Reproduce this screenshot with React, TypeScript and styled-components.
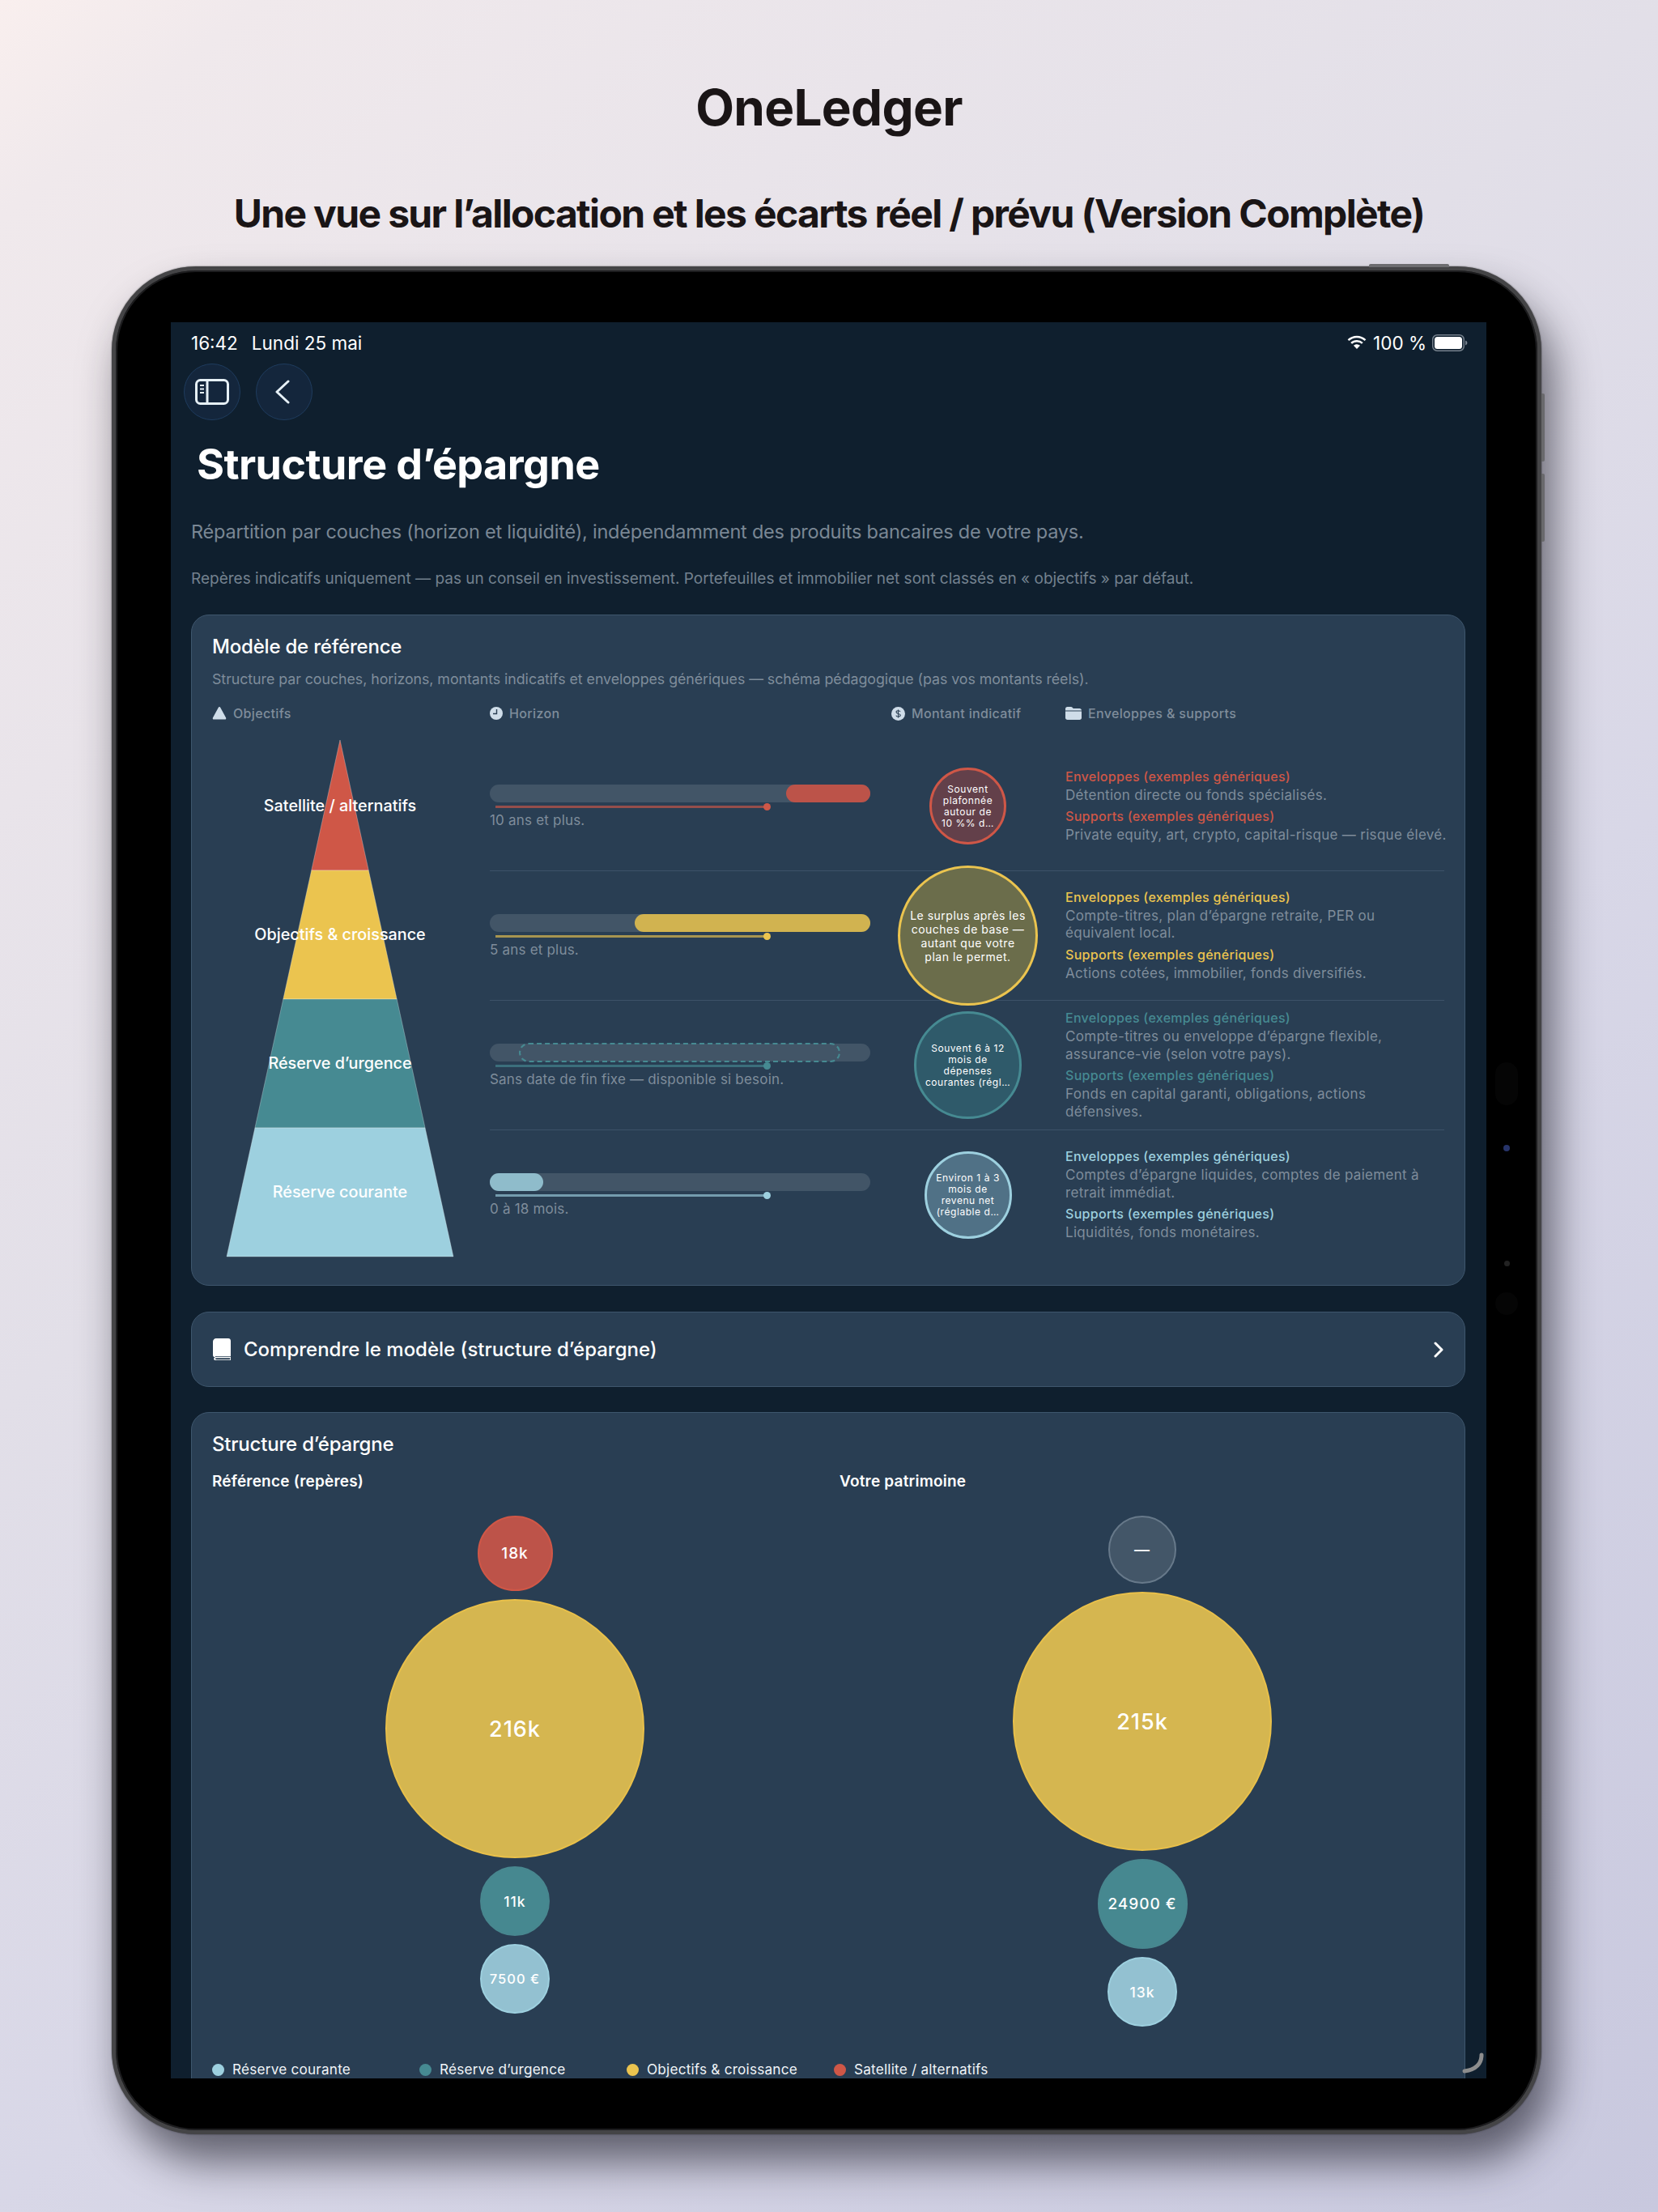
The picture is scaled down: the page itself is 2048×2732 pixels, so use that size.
import React from 'react';
import styled, { createGlobalStyle } from 'styled-components';

const colors = {
  red: '#cf5747',
  yellow: '#ebc44f',
  teal: '#468a92',
  blue: '#9dd0df',
};

const GlobalStyle = createGlobalStyle`
  html, body {
    margin: 0;
    width: 2048px;
    height: 2732px;
    overflow: hidden;
  }
  * { box-sizing: border-box; }
`;

const Page = styled.div`
  width: 2048px;
  height: 2732px;
  overflow: hidden;
  font-family: Inter, 'Liberation Sans', sans-serif;
  background: linear-gradient(140deg, #f9efee 0%, #f0e9ec 6%, #e2dfe8 39%, #d8d7e7 61%, #c8c8de 100%);
`;

const Head = styled.header`
  height: 329px;
  padding-top: 96px;
  text-align: center;
  color: #1a1516;
`;

const Title = styled.h1`
  margin: 0;
  font-size: 62px;
  line-height: 74px;
  font-weight: 700;
  letter-spacing: -0.7px;
`;

const Subtitle = styled.h2`
  margin: 65px 0 0;
  font-size: 48px;
  line-height: 58px;
  font-weight: 700;
  letter-spacing: -1.65px;
`;

const Device = styled.div`
  position: relative;
  width: 1766px;
  height: 2307px;
  margin-left: 138px;
  display: flex;
  padding: 64px 63px 64px 68px;
  background: #000;
  border: 5px solid #444446;
  border-radius: 104px;
  box-shadow: inset 0 0 0 2px #1d1d1f, 14px 34px 52px rgba(25, 25, 35, 0.62), 0 0 2px rgba(0, 0, 0, 0.6);
`;

const TopButton = styled.span`
  position: absolute;
  top: -8px;
  right: 109px;
  width: 99px;
  height: 4px;
  border-radius: 2px 2px 0 0;
  background: #6d6d70;
`;

const SideButton = styled.span<{ $top: number }>`
  position: absolute;
  top: ${({ $top }) => $top}px;
  right: -9px;
  width: 4px;
  height: 84px;
  border-radius: 0 2px 2px 0;
  background: #69696c;
`;

const BezelMark = styled.span<{ $top: number; $w: number; $h: number; $bg: string }>`
  position: absolute;
  top: ${({ $top }) => $top}px;
  right: ${({ $w }) => 38 - $w / 2}px;
  width: ${({ $w }) => $w}px;
  height: ${({ $h }) => $h}px;
  border-radius: 14px;
  background: ${({ $bg }) => $bg};
`;

const Screen = styled.main`
  position: relative;
  flex: 1;
  overflow: hidden;
  padding: 12px 26px 0 25px;
  color: #fff;
  background: #0f1f2e;
`;

const StatusBar = styled.div`
  display: flex;
  align-items: center;
  justify-content: space-between;
  height: 26px;
  margin-right: -3px;
  font-size: 22.5px;
`;

const StatusGroup = styled.div<{ $gap: number }>`
  display: flex;
  align-items: center;
  gap: ${({ $gap }) => $gap}px;
`;

const Nav = styled.nav`
  display: flex;
  gap: 19px;
  margin: 13px 0 0 -9px;
`;

const RoundButton = styled.button<{ $shift?: number }>`
  display: flex;
  align-items: center;
  justify-content: center;
  width: 70px;
  height: 70px;
  padding: 0 ${({ $shift }) => $shift ?? 0}px 0 0;
  border: 1.5px solid #1f3c5e;
  border-radius: 50%;
  background: #14263c;
`;

const PageTitle = styled.h1`
  margin: 24px 0 0 7px;
  font-size: 52px;
  line-height: 62px;
  font-weight: 700;
  letter-spacing: -0.55px;
`;

const Lead = styled.p`
  margin: 37px 0 0;
  font-size: 23.5px;
  line-height: 30px;
  letter-spacing: -0.22px;
  color: #7a8794;
`;

const Note = styled.p`
  margin: 30px 0 0;
  font-size: 19px;
  line-height: 26px;
  color: #73818e;
`;

const Card = styled.section`
  margin-top: 31px;
  padding: 0 25px;
  border: 1.5px solid #3e566d;
  border-radius: 22px;
  background: #293e53;
`;

const CardTitle = styled.h3`
  margin: 0;
  padding-top: 23px;
  font-size: 24px;
  line-height: 32px;
  font-weight: 500;
  letter-spacing: -0.2px;
`;

const CardDesc = styled.p`
  margin: 12px 0 0;
  font-size: 17.8px;
  line-height: 24px;
  letter-spacing: -0.05px;
  color: #7f8d9b;
`;

const ColumnHeads = styled.div`
  display: grid;
  grid-template-columns: 343px 496px 215px 1fr;
  margin-top: 18px;
  height: 24px;
`;

const ColumnHead = styled.div`
  display: flex;
  align-items: center;
  gap: 8px;
  font-size: 16px;
  font-weight: 500;
  letter-spacing: 0.35px;
  color: #7f8d9b;
`;

const ModelBody = styled.div`
  display: flex;
  padding: 23px 0 31px;
`;

const Pyramid = styled.div`
  position: relative;
  flex: none;
  width: 316px;
  height: 638px;
  margin: -3px 27px 0 0;
  display: flex;
  justify-content: center;
`;

const PyramidLabels = styled.div`
  position: absolute;
  inset: 0;
  padding-top: 3px;
  display: grid;
  grid-template-rows: repeat(4, 1fr);
`;

const PyramidLabel = styled.div`
  display: flex;
  align-items: center;
  justify-content: center;
  font-size: 19.8px;
  font-weight: 500;
  color: #fff;
`;

const LayerRows = styled.div`
  flex: 1;
  min-width: 0;
`;

const LayerRow = styled.div`
  display: grid;
  grid-template-columns: 470px 241px 1fr;
  align-items: center;
  height: 160px;
  border-bottom: 1.5px solid #3c5268;
  &:last-child {
    border-bottom: 0;
  }
`;

const HorizonCell = styled.div`
  padding-top: 2px;
`;

const Track = styled.div`
  position: relative;
  height: 22px;
  border-radius: 11px;
  background: #425567;
`;

const TrackFill = styled.div<{ $left: number; $width: number; $color: string }>`
  position: absolute;
  top: 0;
  left: ${({ $left }) => $left}px;
  width: ${({ $width }) => $width}px;
  height: 22px;
  border-radius: 11px;
  background: ${({ $color }) => $color};
`;

const TrackDashed = styled.div`
  position: absolute;
  top: -1px;
  left: 36px;
  width: 397px;
  height: 24px;
  border: 2.5px dashed ${colors.teal};
  border-radius: 12px;
`;

const Marker = styled.div<{ $color: string }>`
  position: relative;
  width: 338px;
  height: 3px;
  margin: 4px 0 0 7px;
  background: ${({ $color }) => $color}a6;
  &::after {
    content: '';
    position: absolute;
    right: -2px;
    top: -3px;
    width: 9px;
    height: 9px;
    border-radius: 50%;
    background: ${({ $color }) => $color};
  }
`;

const HorizonText = styled.div`
  margin-top: 4px;
  font-size: 17px;
  line-height: 23px;
  letter-spacing: 0.2px;
  color: #7f8d9b;
`;

const AmountCell = styled.div`
  display: flex;
  justify-content: center;
  align-items: center;
  height: 0;
`;

const AmountBubble = styled.div<{ $size: number; $color: string; $bg: string; $big?: boolean }>`
  flex: none;
  display: flex;
  flex-direction: column;
  align-items: center;
  justify-content: center;
  width: ${({ $size }) => $size}px;
  height: ${({ $size }) => $size}px;
  border: 3px solid ${({ $color }) => $color};
  border-radius: 50%;
  background: ${({ $bg }) => $bg};
  font-size: ${({ $big }) => ($big ? 14 : 12)}px;
  line-height: ${({ $big }) => ($big ? 17 : 14)}px;
  font-weight: 400;
  letter-spacing: ${({ $big }) => ($big ? 0.5 : 0.55)}px;
  white-space: nowrap;
  color: #fff;
`;

const EnvCell = styled.div`
  display: flex;
  flex-direction: column;
  font-size: 17px;
  line-height: 21.5px;
  letter-spacing: 0.3px;
`;

const EnvHeading = styled.div<{ $color: string; $second?: boolean }>`
  margin: ${({ $second }) => ($second ? 5 : 0)}px 0 1.5px;
  font-size: 16px;
  font-weight: 500;
  letter-spacing: 0.3px;
  color: ${({ $color }) => $color};
`;

const EnvText = styled.div<{ $nowrap?: boolean }>`
  color: #7f8d9b;
  white-space: ${({ $nowrap }) => ($nowrap ? 'nowrap' : 'normal')};
`;

const Disclosure = styled.button`
  display: flex;
  align-items: center;
  gap: 16px;
  width: 100%;
  height: 93px;
  margin-top: 32px;
  padding: 0 26px;
  border: 1.5px solid #3e566d;
  border-radius: 22px;
  background: #293e53;
  color: #fff;
  font: 500 24px Inter, sans-serif;
`;

const DisclosureLabel = styled.span`
  flex: 1;
  text-align: left;
`;

const BubbleColumns = styled.div`
  display: grid;
  grid-template-columns: 748px 748px;
  gap: 27px;
  margin-top: 18px;
`;

const ColumnTitle = styled.div`
  font-size: 19px;
  line-height: 24px;
  font-weight: 600;
  letter-spacing: 0.2px;
`;

const BubbleStack = styled.div`
  display: flex;
  flex-direction: column;
  align-items: center;
  gap: 10px;
  margin-top: 30px;
`;

const Bubble = styled.div<{ $size: number; $bg: string; $line: string; $font: number }>`
  display: flex;
  align-items: center;
  justify-content: center;
  width: ${({ $size }) => $size}px;
  height: ${({ $size }) => $size}px;
  border: 2.5px solid ${({ $line }) => $line};
  border-radius: 50%;
  background: ${({ $bg }) => $bg};
  font-size: ${({ $font }) => $font}px;
  font-weight: 500;
  letter-spacing: 1px;
`;

const Legend = styled.div`
  display: grid;
  grid-template-columns: repeat(4, 256px);
  margin: 41px 0 60px;
`;

const LegendItem = styled.div`
  display: flex;
  align-items: center;
  gap: 10px;
  font-size: 17.2px;
  line-height: 24px;
  letter-spacing: 0.2px;
  color: #f0f4f7;
`;

const LegendDot = styled.span<{ $color: string }>`
  width: 15px;
  height: 15px;
  border-radius: 50%;
  background: ${({ $color }) => $color};
`;

const ScrollHint = styled.svg`
  position: absolute;
  right: 3px;
  bottom: 6px;
`;

const SidebarIcon = () => (
  <svg width="42" height="32" viewBox="0 0 42 32" fill="none" stroke="#e6f0f6" strokeWidth="3">
    <rect x="1.5" y="1.5" width="39" height="29" rx="5" />
    <path d="M15 2v28" />
    <path d="M6 8h5M6 12.5h5M6 17h5" strokeWidth="2" />
  </svg>
);

const BackIcon = () => (
  <svg width="20" height="30" viewBox="0 0 20 30" fill="none" stroke="#e6f0f6" strokeWidth="3" strokeLinecap="round" strokeLinejoin="round">
    <path d="M17 2 3 15l14 13" />
  </svg>
);

const WifiIcon = () => (
  <svg width="26" height="18" viewBox="0 0 24 17" fill="#fff">
    <path d="M12 3c3.5 0 6.7 1.3 9.1 3.6l1.6-1.7A15.4 15.4 0 0 0 12 .6 15.4 15.4 0 0 0 1.3 4.9l1.6 1.7A13.1 13.1 0 0 1 12 3Z" />
    <path d="M12 8c2.1 0 4.1.8 5.6 2.2l1.7-1.7A10.5 10.5 0 0 0 12 5.6c-2.8 0-5.4 1.1-7.3 2.9l1.7 1.7A8.1 8.1 0 0 1 12 8Z" />
    <path d="M12 10.6c-1.5 0-2.8.6-3.8 1.5L12 16l3.8-3.9a5.5 5.5 0 0 0-3.8-1.5Z" />
  </svg>
);

const BatteryIcon = () => (
  <svg width="44" height="21" viewBox="0 0 44 21">
    <rect x="0.75" y="0.75" width="38.5" height="19.5" rx="5.5" fill="none" stroke="#75808c" strokeWidth="1.5" />
    <rect x="3" y="3" width="34" height="15" rx="3.5" fill="#fff" />
    <path d="M41 7.5c1.4.4 2.4 1.6 2.4 3s-1 2.6-2.4 3Z" fill="#75808c" />
  </svg>
);

const TriangleIcon = () => (
  <svg width="18" height="16" viewBox="0 0 18 16" fill="#cfdde9">
    <path d="M9 0c.6 0 1 .3 1.3.9l6.8 12.6c.5 1-.1 2.1-1.2 2.1H2.1C1 15.6.4 14.5.9 13.5L7.7.9C8 .3 8.4 0 9 0Z" />
  </svg>
);

const ClockIcon = () => (
  <svg width="16" height="16" viewBox="0 0 16 16">
    <circle cx="8" cy="8" r="8" fill="#cfdde9" />
    <path d="M8.5 3v5.500H4" fill="none" stroke="#293e53" strokeWidth="1.4" />
  </svg>
);

const DollarIcon = () => (
  <svg width="17" height="17" viewBox="0 0 17 17">
    <circle cx="8.5" cy="8.5" r="8.500" fill="#cfdde9" />
    <path d="M11 6.200c-.3-.9-1.300-1.400-2.500-1.400-1.400 0-2.500.7-2.500 1.800 0 2.400 5.200 1.300 5.200 3.700 0 1.100-1.200 1.900-2.700 1.900-1.300 0-2.400-.6-2.700-1.600M8.500 3.500v10" fill="none" stroke="#293e53" strokeWidth="1.1" />
  </svg>
);

const FolderIcon = () => (
  <svg width="20" height="16" viewBox="0 0 20 16" fill="#cfdde9">
    <path d="M2.5 0h4.400c.7 0 1.200.2 1.700.7L9.700 2h7.800C18.900 2 20 3 20 4.400H0V2.500C0 1 1 0 2.500 0Z" />
    <path d="M0 5.500h20v8C20 15 19 16 17.500 16h-15C1 16 0 15 0 13.500Z" />
  </svg>
);

const BookIcon = () => (
  <svg width="22" height="27" viewBox="0 0 22 27" fill="#fff">
    <path d="M4 0h15c1.700 0 3 1.300 3 3v19H5c-1.300 0-2.300.5-3 1.300C.8 23 0 22 0 20.800V4c0-2.200 1.800-4 4-4Z" />
    <path d="M5 23.500h17V27H5c-1.400 0-2.800-.5-3-1.700 0-1 1.400-1.800 3-1.800Z" fill="none" stroke="#fff" strokeWidth="1.6" />
  </svg>
);

const ChevronIcon = () => (
  <svg width="12" height="20" viewBox="0 0 12 20" fill="none" stroke="#fff" strokeWidth="3" strokeLinecap="round" strokeLinejoin="round">
    <path d="M2 2l8 8-8 8" />
  </svg>
);

const PyramidShape = () => (
  <svg width="282" height="640" viewBox="-1 -1 282 640" stroke="rgba(255,255,255,0.28)" strokeWidth="1">
    <polygon points="140,0 175.3,161 104.7,161" fill={colors.red} />
    <polygon points="104.7,161 175.3,161 210.2,320 69.8,320" fill={colors.yellow} />
    <polygon points="69.8,320 210.2,320 245.1,479 34.9,479" fill={colors.teal} />
    <polygon points="34.9,479 245.1,479 280,638 0,638" fill={colors.blue} />
  </svg>
);

const layers = [
  {
    name: 'Satellite / alternatifs',
    color: colors.red,
    fill: { left: 366, width: 104, color: '#bc5349' },
    horizon: '10 ans et plus.',
    size: 95,
    bubbleBg: '#63404a',
    lines: ['Souvent', 'plafonnée', 'autour de', '10 %% d…'],
    env: 'Détention directe ou fonds spécialisés.',
    sup: 'Private equity, art, crypto, capital-risque — risque élevé.',
    supOneLine: true,
  },
  {
    name: 'Objectifs & croissance',
    color: colors.yellow,
    fill: { left: 179, width: 291, color: '#d1b350' },
    horizon: '5 ans et plus.',
    size: 173,
    big: true,
    bubbleBg: '#6b6d4b',
    lines: ['Le surplus après les', 'couches de base —', 'autant que votre', 'plan le permet.'],
    env: 'Compte-titres, plan d’épargne retraite, PER ou équivalent local.',
    sup: 'Actions cotées, immobilier, fonds diversifiés.',
  },
  {
    name: 'Réserve d’urgence',
    color: colors.teal,
    dashed: true,
    horizon: 'Sans date de fin fixe — disponible si besoin.',
    size: 133,
    bubbleBg: '#2f5a6a',
    lines: ['Souvent 6 à 12', 'mois de', 'dépenses', 'courantes (régl…'],
    env: 'Compte-titres ou enveloppe d’épargne flexible, assurance-vie (selon votre pays).',
    sup: 'Fonds en capital garanti, obligations, actions défensives.',
  },
  {
    name: 'Réserve courante',
    color: colors.blue,
    fill: { left: 0, width: 66, color: '#8fbccb' },
    horizon: '0 à 18 mois.',
    size: 108,
    bubbleBg: '#507186',
    lines: ['Environ 1 à 3', 'mois de', 'revenu net', '(réglable d…'],
    env: 'Comptes d’épargne liquides, comptes de paiement à retrait immédiat.',
    sup: 'Liquidités, fonds monétaires.',
  },
];

const bubbleTones = {
  red: { bg: '#bd5349', line: colors.red },
  yellow: { bg: '#d5b650', line: '#e9c04a' },
  teal: { bg: '#468890', line: '#48878f' },
  blue: { bg: '#93c1d1', line: colors.blue },
  empty: { bg: '#435668', line: '#67798a' },
};

const reference = [
  { label: '18k', size: 93, font: 19, tone: bubbleTones.red },
  { label: '216k', size: 320, font: 27, tone: bubbleTones.yellow },
  { label: '11k', size: 86, font: 17.5, tone: bubbleTones.teal },
  { label: '7500 €', size: 86, font: 16.5, tone: bubbleTones.blue },
];

const actual = [
  { label: '—', size: 84, font: 19, tone: bubbleTones.empty },
  { label: '215k', size: 320, font: 27, tone: bubbleTones.yellow },
  { label: '24900 €', size: 111, font: 19, tone: bubbleTones.teal },
  { label: '13k', size: 86, font: 17.5, tone: bubbleTones.blue },
];

const legend = [...layers].reverse();

export default function App() {
  return (
    <Page>
      <GlobalStyle />
      <Head>
        <Title>OneLedger</Title>
        <Subtitle>Une vue sur l’allocation et les écarts réel / prévu (Version Complète)</Subtitle>
      </Head>
      <Device>
        <TopButton />
        <SideButton $top={152} />
        <SideButton $top={251} />
        <BezelMark $top={978} $w={28} $h={53} $bg="#050505" />
        <BezelMark $top={1080} $w={8} $h={8} $bg="#27346a" />
        <BezelMark $top={1223} $w={7} $h={7} $bg="#222" />
        <BezelMark $top={1262} $w={28} $h={28} $bg="#050505" />
        <Screen>
          <StatusBar>
            <StatusGroup $gap={17}>
              <span>16:42</span>
              <span>Lundi 25 mai</span>
            </StatusGroup>
            <StatusGroup $gap={7}>
              <WifiIcon />
              <span>100 %</span>
              <BatteryIcon />
            </StatusGroup>
          </StatusBar>
          <Nav>
            <RoundButton><SidebarIcon /></RoundButton>
            <RoundButton $shift={5}><BackIcon /></RoundButton>
          </Nav>
          <PageTitle>Structure d’épargne</PageTitle>
          <Lead>Répartition par couches (horizon et liquidité), indépendamment des produits bancaires de votre pays.</Lead>
          <Note>Repères indicatifs uniquement — pas un conseil en investissement. Portefeuilles et immobilier net sont classés en « objectifs » par défaut.</Note>

          <Card>
            <CardTitle>Modèle de référence</CardTitle>
            <CardDesc>Structure par couches, horizons, montants indicatifs et enveloppes génériques — schéma pédagogique (pas vos montants réels).</CardDesc>
            <ColumnHeads>
              <ColumnHead><TriangleIcon />Objectifs</ColumnHead>
              <ColumnHead><ClockIcon />Horizon</ColumnHead>
              <ColumnHead><DollarIcon />Montant indicatif</ColumnHead>
              <ColumnHead><FolderIcon />Enveloppes &amp; supports</ColumnHead>
            </ColumnHeads>
            <ModelBody>
              <Pyramid>
                <PyramidShape />
                <PyramidLabels>
                  {layers.map((l) => (
                    <PyramidLabel key={l.name}>{l.name}</PyramidLabel>
                  ))}
                </PyramidLabels>
              </Pyramid>
              <LayerRows>
                {layers.map((l) => (
                  <LayerRow key={l.name}>
                    <HorizonCell>
                      <Track>
                        {l.fill && <TrackFill $left={l.fill.left} $width={l.fill.width} $color={l.fill.color} />}
                        {l.dashed && <TrackDashed />}
                      </Track>
                      <Marker $color={l.color} />
                      <HorizonText>{l.horizon}</HorizonText>
                    </HorizonCell>
                    <AmountCell>
                      <AmountBubble $size={l.size} $color={l.color} $bg={l.bubbleBg} $big={l.big}>
                        {l.lines.map((line) => (
                          <span key={line}>{line}</span>
                        ))}
                      </AmountBubble>
                    </AmountCell>
                    <EnvCell>
                      <EnvHeading $color={l.color}>Enveloppes (exemples génériques)</EnvHeading>
                      <EnvText>{l.env}</EnvText>
                      <EnvHeading $color={l.color} $second>Supports (exemples génériques)</EnvHeading>
                      <EnvText $nowrap={l.supOneLine}>{l.sup}</EnvText>
                    </EnvCell>
                  </LayerRow>
                ))}
              </LayerRows>
            </ModelBody>
          </Card>

          <Disclosure>
            <BookIcon />
            <DisclosureLabel>Comprendre le modèle (structure d’épargne)</DisclosureLabel>
            <ChevronIcon />
          </Disclosure>

          <Card>
            <CardTitle>Structure d’épargne</CardTitle>
            <BubbleColumns>
              <div>
                <ColumnTitle>Référence (repères)</ColumnTitle>
                <BubbleStack>
                  {reference.map((b) => (
                    <Bubble key={b.label} $size={b.size} $font={b.font} $bg={b.tone.bg} $line={b.tone.line}>{b.label}</Bubble>
                  ))}
                </BubbleStack>
              </div>
              <div>
                <ColumnTitle>Votre patrimoine</ColumnTitle>
                <BubbleStack>
                  {actual.map((b) => (
                    <Bubble key={b.label} $size={b.size} $font={b.font} $bg={b.tone.bg} $line={b.tone.line}>{b.label}</Bubble>
                  ))}
                </BubbleStack>
              </div>
            </BubbleColumns>
            <Legend>
              {legend.map((l) => (
                <LegendItem key={l.name}>
                  <LegendDot $color={l.color} />
                  {l.name}
                </LegendItem>
              ))}
            </Legend>
          </Card>
          <ScrollHint width="28" height="26" viewBox="0 0 28 26" fill="none" stroke="#8d8d8d" strokeWidth="5" strokeLinecap="round">
            <path d="M25 3c0 10-6 18-21 20" />
          </ScrollHint>
        </Screen>
      </Device>
    </Page>
  );
}
